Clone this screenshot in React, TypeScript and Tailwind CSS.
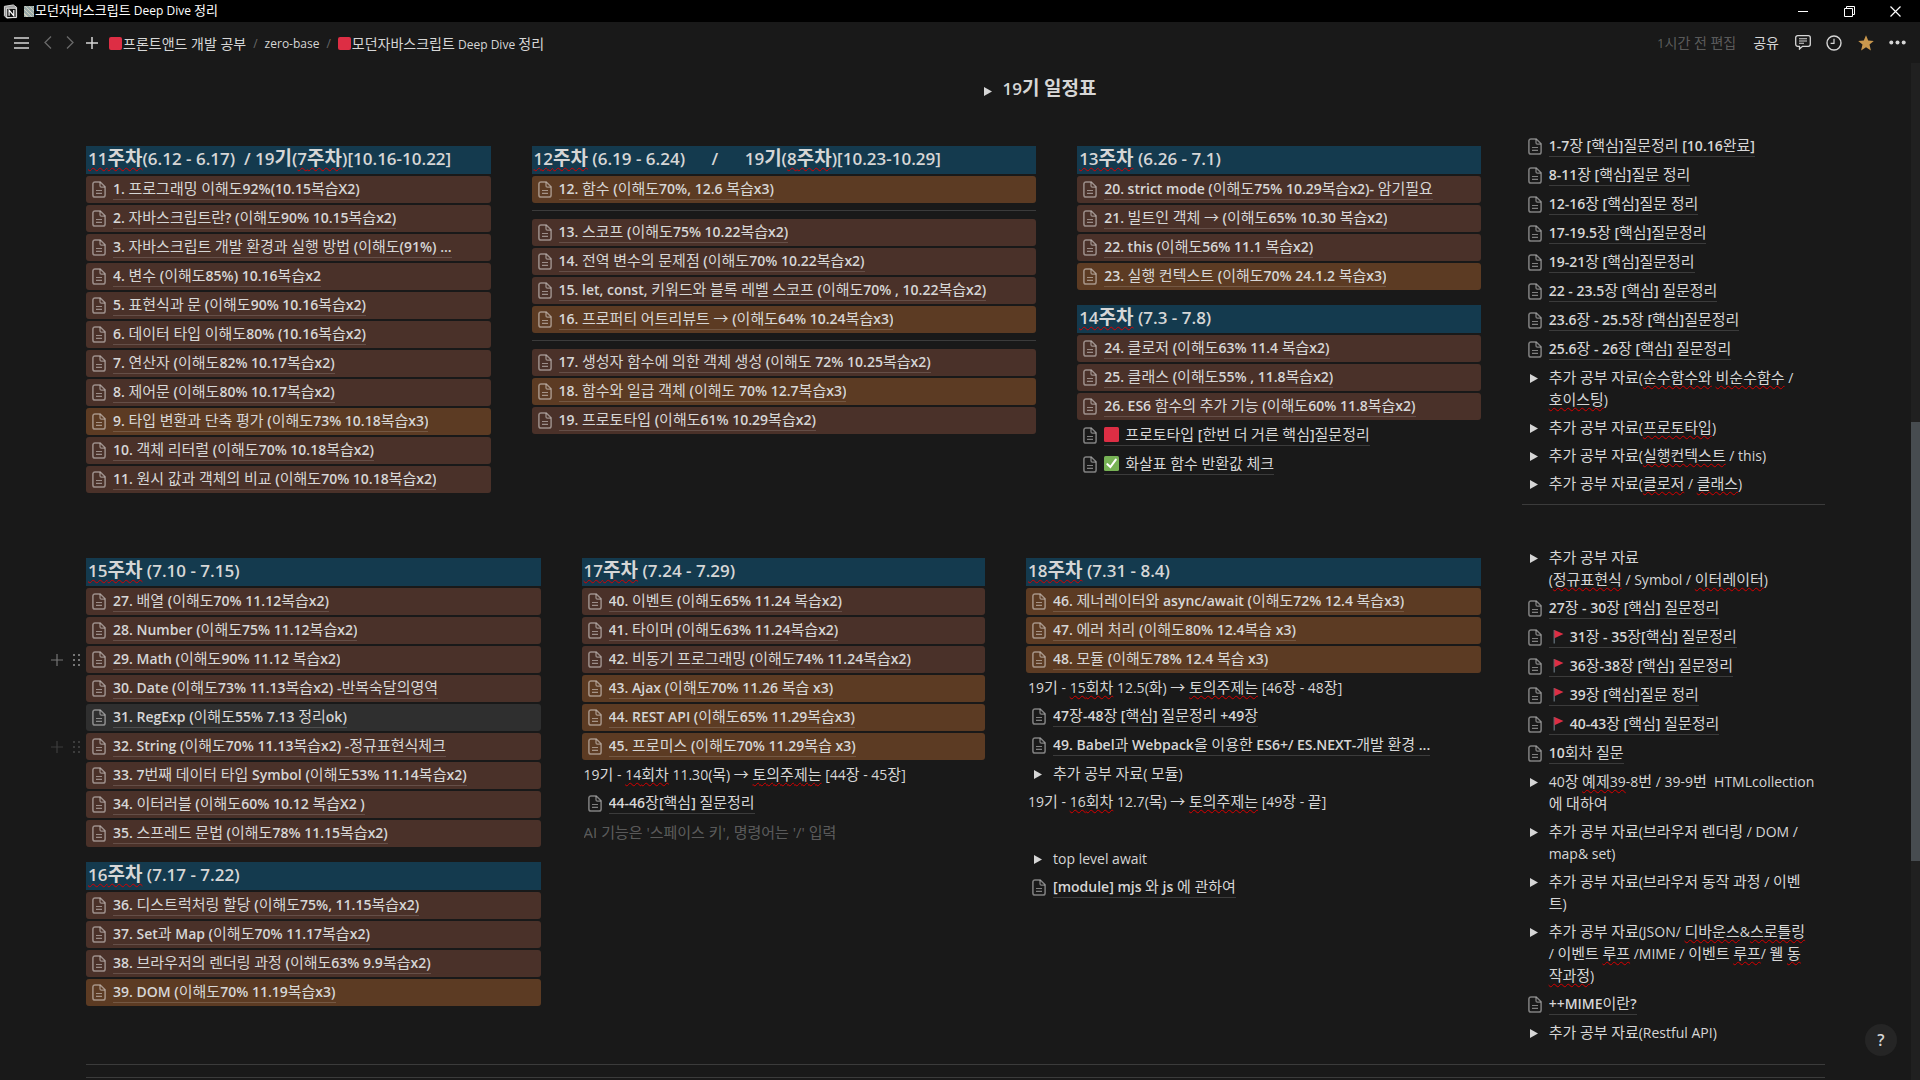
import React from "react";
import clsx from "clsx";

type Tone = "brown" | "orange" | "gray";
type Mark = "square" | "check" | "flag";

type Block =
  | { type: "heading"; text: string }
  | { type: "page"; text: string; tone?: Tone; mark?: Mark; handle?: "hover" | "fading" }
  | { type: "toggle"; text: string }
  | { type: "text"; text: string }
  | { type: "divider" }
  | { type: "blank" }
  | { type: "prompt"; text: string };

const TONES: Record<Tone, string> = {
  brown: "bg-[#4a3129]",
  orange: "bg-[#5c3b23]",
  gray: "bg-[#2f2f2f]",
};

const heading = (text: string): Block => ({ type: "heading", text });
const page = (text: string, tone?: Tone, extra: { mark?: Mark; handle?: "hover" | "fading" } = {}): Block => ({
  type: "page",
  text,
  tone,
  ...extra,
});
const toggle = (text: string): Block => ({ type: "toggle", text });
const text = (value: string): Block => ({ type: "text", text: value });
const divider: Block = { type: "divider" };
const blank: Block = { type: "blank" };

// Words between ~ ~ are flagged by the spell checker.
const week11: Block[] = [
  heading("~11주차~(6.12 - 6.17)  / 19기(~7주차~)[10.16-10.22]"),
  page("1. 프로그래밍 이해도92%(10.15복습X2)", "brown"),
  page("2. 자바스크립트란? (이해도90% 10.15복습x2)", "brown"),
  page("3. 자바스크립트 개발 환경과 실행 방법 (이해도(91%) ...", "brown"),
  page("4. 변수 (이해도85%) 10.16복습x2", "brown"),
  page("5. 표현식과 문 (이해도90% 10.16복습x2)", "brown"),
  page("6. 데이터 타입 이해도80% (10.16복습x2)", "brown"),
  page("7. 연산자 (이해도82% 10.17복습x2)", "brown"),
  page("8. 제어문 (이해도80% 10.17복습x2)", "brown"),
  page("9. 타입 변환과 단축 평가 (이해도73% 10.18복습x3)", "orange"),
  page("10. 객체 리터럴 (이해도70% 10.18복습x2)", "brown"),
  page("11. 원시 값과 객체의 비교 (이해도70% 10.18복습x2)", "brown"),
];

const week12: Block[] = [
  heading("~12주차~ (6.19 - 6.24)      /      19기(~8주차~)[10.23-10.29]"),
  page("12. 함수 (이해도70%, 12.6 복습x3)", "orange"),
  divider,
  page("13. 스코프 (이해도75% 10.22복습x2)", "brown"),
  page("14. 전역 변수의 문제점 (이해도70% 10.22복습x2)", "brown"),
  page("15. let, const, 키워드와 블록 레벨 스코프 (이해도70% , 10.22복습x2)", "brown"),
  page("16. 프로퍼티 어트리뷰트 → (이해도64% 10.24복습x3)", "orange"),
  divider,
  page("17. 생성자 함수에 의한 객체 생성 (이해도 72% 10.25복습x2)", "brown"),
  page("18. 함수와 일급 객체 (이해도 70% 12.7복습x3)", "orange"),
  page("19. 프로토타입 (이해도61% 10.29복습x2)", "brown"),
];

const week13: Block[] = [
  heading("~13주차~ (6.26 - 7.1)"),
  page("20. strict mode (이해도75% 10.29복습x2)- 암기필요", "brown"),
  page("21. 빌트인 객체 → (이해도65% 10.30 복습x2)", "brown"),
  page("22. this (이해도56% 11.1 복습x2)", "brown"),
  page("23. 실행 컨텍스트 (이해도70% 24.1.2 복습x3)", "orange"),
  heading("~14주차~ (7.3 - 7.8)"),
  page("24. 클로저 (이해도63% 11.4 복습x2)", "brown"),
  page("25. 클래스 (이해도55% , 11.8복습x2)", "brown"),
  page("26. ES6 함수의 추가 기능 (이해도60% 11.8복습x2)", "brown"),
  page("프로토타입 [한번 더 거른 핵심]질문정리", undefined, { mark: "square" }),
  page("화살표 함수 반환값 체크", undefined, { mark: "check" }),
];

const questionsTop: Block[] = [
  page("1-7장 [핵심]질문정리 [10.16완료]"),
  page("8-11장 [핵심]질문 정리"),
  page("12-16장 [핵심]질문 정리"),
  page("17-19.5장 [핵심]질문정리"),
  page("19-21장 [핵심]질문정리"),
  page("22 - 23.5장 [핵심] 질문정리"),
  page("23.6장 - 25.5장 [핵심]질문정리"),
  page("25.6장 - 26장 [핵심] 질문정리"),
  toggle("추가 공부 자료(~순수함수와~ ~비순수함수~ /\n~호이스팅~)"),
  toggle("추가 공부 자료(~프로토타입~)"),
  toggle("추가 공부 자료(~실행컨텍스트~ / this)"),
  toggle("추가 공부 자료(~클로저~ / ~클래스~)"),
  divider,
];

const week15: Block[] = [
  heading("~15주차~ (7.10 - 7.15)"),
  page("27. 배열 (이해도70% 11.12복습x2)", "brown"),
  page("28. Number (이해도75% 11.12복습x2)", "brown"),
  page("29. Math (이해도90% 11.12 복습x2)", "brown", { handle: "hover" }),
  page("30. Date (이해도73% 11.13복습x2) -반복숙달의영역", "brown"),
  page("31. RegExp (이해도55% 7.13 정리ok)", "gray"),
  page("32. String (이해도70% 11.13복습x2) -정규표현식체크", "brown", { handle: "fading" }),
  page("33. 7번째 데이터 타입 Symbol (이해도53% 11.14복습x2)", "brown"),
  page("34. 이터러블 (이해도60% 10.12 복습X2 )", "brown"),
  page("35. 스프레드 문법 (이해도78% 11.15복습x2)", "brown"),
  heading("~16주차~ (7.17 - 7.22)"),
  page("36. 디스트럭처링 할당 (이해도75%, 11.15복습x2)", "brown"),
  page("37. Set과 Map (이해도70% 11.17복습x2)", "brown"),
  page("38. 브라우저의 렌더링 과정 (이해도63% 9.9복습x2)", "brown"),
  page("39. DOM (이해도70% 11.19복습x3)", "orange"),
];

const week17: Block[] = [
  heading("~17주차~ (7.24 - 7.29)"),
  page("40. 이벤트 (이해도65% 11.24 복습x2)", "brown"),
  page("41. 타이머 (이해도63% 11.24복습x2)", "brown"),
  page("42. 비동기 프로그래밍 (이해도74% 11.24복습x2)", "brown"),
  page("43. Ajax (이해도70% 11.26 복습 x3)", "orange"),
  page("44. REST API (이해도65% 11.29복습x3)", "orange"),
  page("45. 프로미스 (이해도70% 11.29복습 x3)", "orange"),
  text("19기 - ~14회차~ 11.30(목) → ~토의주제는~ [44장 - 45장]"),
  page("44-46장[핵심] 질문정리"),
  { type: "prompt", text: "AI 기능은 '스페이스 키', 명령어는 '/' 입력" },
];

const week18: Block[] = [
  heading("~18주차~ (7.31 - 8.4)"),
  page("46. 제너레이터와 async/await (이해도72% 12.4 복습x3)", "orange"),
  page("47. 에러 처리 (이해도80% 12.4복습 x3)", "orange"),
  page("48. 모듈 (이해도78% 12.4 복습 x3)", "orange"),
  text("19기 - ~15회차~ 12.5(화) → ~토의주제는~ [46장 - 48장]"),
  page("47장-48장 [핵심] 질문정리 +49장"),
  page("49. Babel과 Webpack을 이용한 ES6+/ ES.NEXT-개발 환경 ..."),
  toggle("추가 공부 자료( 모듈)"),
  text("19기 - ~16회차~ 12.7(목) → ~토의주제는~ [49장 - 끝]"),
  blank,
  toggle("top level await"),
  page("[module] mjs 와 js 에 관하여"),
];

const questionsBottom: Block[] = [
  toggle("추가 공부 자료\n(~정규표현식~ / Symbol / ~이터레이터~)"),
  page("27장 - 30장 [핵심] 질문정리"),
  page("31장 - 35장[핵심] 질문정리", undefined, { mark: "flag" }),
  page("36장-38장 [핵심] 질문정리", undefined, { mark: "flag" }),
  page("39장 [핵심]질문 정리", undefined, { mark: "flag" }),
  page("40-43장 [핵심] 질문정리", undefined, { mark: "flag" }),
  page("10회차 질문"),
  toggle("40장 ~예제39~-8번 / 39-9번  HTMLcollection\n에 대하여"),
  toggle("추가 공부 자료(브라우저 렌더링 / DOM /\nmap& set)"),
  toggle("추가 공부 자료(브라우저 동작 과정 / 이벤\n트)"),
  toggle("추가 공부 자료(JSON/ ~디바운스~&~스로틀링~\n/ 이벤트 ~루프~ /MIME / 이벤트 ~루프~/ 웰 ~동\n작과정~)"),
  page("++MIME이란?"),
  toggle("추가 공부 자료(Restful API)"),
];

// Hangul runs get their own size so that they sit well beside the Latin face.
function Script({ value, size }: { value: string; size: "body" | "heading" }) {
  return (
    <>
      {value.split(/([\u3131-\uD79D→]+)/).map((run, i) =>
        i % 2 === 1 ? (
          <span key={i} className={size === "heading" ? "text-[19px] leading-none" : "text-[15px] leading-none font-normal"}>
            {run}
          </span>
        ) : (
          run
        )
      )}
    </>
  );
}

function RichText({ value, size = "body" }: { value: string; size?: "body" | "heading" }) {
  return (
    <>
      {value.split("~").map((part, i) =>
        i % 2 === 1 ? (
          <span
            key={i}
            className="underline decoration-[#d80000] decoration-wavy decoration-1 underline-offset-2 [text-decoration-skip-ink:none]"
          >
            <Script value={part} size={size} />
          </span>
        ) : (
          <Script key={i} value={part} size={size} />
        )
      )}
    </>
  );
}

function PageIcon() {
  return (
    <svg viewBox="0 0 14 17" className="h-[17px] w-[14px] shrink-0 text-white/45" fill="none" stroke="currentColor" strokeWidth="1.5">
      <path d="M3 .9h5.2l4.9 4.9V14a2.1 2.1 0 0 1-2.1 2.1H3A2.1 2.1 0 0 1 .9 14V3A2.1 2.1 0 0 1 3 .9Z" />
      <path d="M8 1.2v3.6c0 .8.5 1.3 1.3 1.3h3.5" strokeWidth="1.3" />
      <path d="M4 9.5h6M4 12.4h6" strokeWidth="1.1" />
    </svg>
  );
}

function MarkIcon({ mark }: { mark: Mark }) {
  if (mark === "square") {
    return (
      <svg viewBox="0 0 15 15" className="mr-[6px] inline h-[15px] w-[15px] align-[-2px]">
        <rect width="15" height="15" rx="1.5" fill="#dd2e44" />
      </svg>
    );
  }
  if (mark === "check") {
    return (
      <svg viewBox="0 0 15 15" className="mr-[6px] inline h-[15px] w-[15px] align-[-2px]">
        <rect width="15" height="15" rx="1.5" fill="#77b255" />
        <path d="M3.4 8.2 6.4 11 11.8 3.6" fill="none" stroke="#fff" strokeWidth="2.1" strokeLinecap="round" />
      </svg>
    );
  }
  return (
    <svg viewBox="0 0 15 15" className="mr-[6px] inline h-[15px] w-[15px] align-[-2px]">
      <path d="M5.2 1v13.5" stroke="#66757f" strokeWidth="1.2" />
      <path d="M5.5 1l9 4-9 4.3Z" fill="#dd2e44" />
    </svg>
  );
}

function RedSquare() {
  return <span className="h-[13px] w-[13px] shrink-0 rounded-[2px] bg-[#dd2e44]" />;
}

function Handle({ fading }: { fading: boolean }) {
  return (
    <div className={clsx("absolute top-0 -left-[35px] flex h-full items-center gap-[9px] text-white", fading ? "opacity-15" : "opacity-40")}>
      <button aria-label="블록 추가">
        <svg viewBox="0 0 12 12" className="h-3 w-3" stroke="currentColor" strokeWidth="1.2">
          <path d="M6 0v12M0 6h12" />
        </svg>
      </button>
      <button aria-label="블록 이동">
        <svg viewBox="0 0 10 14" className="h-[14px] w-[10px]" fill="currentColor">
          {[1, 6, 11].map((y) => (
            <React.Fragment key={y}>
              <rect x="1" y={y} width="2" height="2" />
              <rect x="6" y={y} width="2" height="2" />
            </React.Fragment>
          ))}
        </svg>
      </button>
    </div>
  );
}

function Triangle() {
  return (
    <svg viewBox="0 0 8 9" className="h-[9px] w-2" fill="currentColor">
      <path d="M0 0l8 4.5L0 9Z" />
    </svg>
  );
}

function BlockView({ block }: { block: Block }) {
  switch (block.type) {
    case "heading":
      return (
        <h3 className="mt-[13px] h-7 bg-[#143a4e] px-[2px] text-[17px] leading-[26px] font-semibold whitespace-pre">
          <RichText value={block.text} size="heading" />
        </h3>
      );
    case "page":
      return (
        <div className={clsx("relative flex h-[27px] items-center gap-[7px] rounded-[3px] pr-[2px] pl-[6px]", block.tone && TONES[block.tone])}>
          {block.handle && <Handle fading={block.handle === "fading"} />}
          <PageIcon />
          <a href="#" className="h-[21px] truncate border-b border-white/15 text-[14px] leading-[20px] font-semibold">
            {block.mark && <MarkIcon mark={block.mark} />}
            <Script value={block.text} size="body" />
          </a>
        </div>
      );
    case "toggle":
      return (
        <div className="flex gap-[7px] py-[2px] pr-[2px] pl-[6px]">
          <button className="flex h-[22px] w-[14px] shrink-0 items-center pl-[2px]" aria-label="토글 열기">
            <Triangle />
          </button>
          <p className="min-w-0 flex-1 text-[14px] leading-[22px] whitespace-pre-wrap">
            <RichText value={block.text} />
          </p>
        </div>
      );
    case "text":
      return (
        <p className="px-[2px] py-[2px] text-[14px] leading-[22px]">
          <RichText value={block.text} />
        </p>
      );
    case "prompt":
      return (
        <input
          className="h-[26px] w-full bg-transparent px-[2px] text-[15px] outline-none placeholder:text-white/30"
          aria-label="새 블록"
          placeholder={block.text}
        />
      );
    case "divider":
      return <hr className="mt-[5px] mb-[6px] border-white/15" />;
    case "blank":
      return <div className="h-[27px]" />;
  }
}

function Column({ blocks, className }: { blocks: Block[]; className: string }) {
  return (
    <div className={clsx("flex min-w-0 flex-col gap-[2px]", className)}>
      {blocks.map((b, i) => (
        <BlockView key={i} block={b} />
      ))}
    </div>
  );
}

function TitleBar() {
  return (
    <div className="flex h-[22px] shrink-0 items-center bg-black pl-[3px] text-[12px] text-white">
      <svg viewBox="0 0 16 16" className="h-[15px] w-[15px]">
        <path d="M1.5 2.5 11 1l3.500 2.500V14L4 15l-2.500-2.500Z" fill="#9b9b9b" stroke="#ddd" strokeWidth="1" />
        <rect x="4" y="4.5" width="10" height="10" fill="#111" stroke="#eee" />
        <path d="M6.5 12.500v-6l5 6v-6" fill="none" stroke="#fff" strokeWidth="1.3" />
      </svg>
      <span className="mr-px ml-[6px] h-[11px] w-[10px] bg-[repeating-linear-gradient(45deg,#9aa_0_2px,#ccb_2px_3px)]" />
      <span>
        <span className="text-[13px]">모던자바스크립트</span> Deep Dive <span className="text-[13px]">정리</span>
      </span>
      <div className="ml-auto flex items-center gap-[35px] pr-[19px]">
        <button aria-label="최소화">
          <svg viewBox="0 0 11 11" className="h-[11px] w-[11px]" stroke="currentColor">
            <path d="M0 5.5h10" />
          </svg>
        </button>
        <button aria-label="이전 크기로">
          <svg viewBox="0 0 11 11" className="h-[11px] w-[11px]" fill="none" stroke="currentColor">
            <path d="M.5 2.5h8v8h-8ZM2.5 2.5v-2h8v8h-2" />
          </svg>
        </button>
        <button aria-label="닫기">
          <svg viewBox="0 0 11 11" className="h-[11px] w-[11px]" stroke="currentColor" strokeWidth="1.2">
            <path d="M.5.5l10 10M10.5.5l-10 10" />
          </svg>
        </button>
      </div>
    </div>
  );
}

function TopBar() {
  return (
    <header className="flex h-[41px] shrink-0 items-center px-[14px] text-[12px]">
      <button aria-label="메뉴">
        <svg viewBox="0 0 15 12" className="h-3 w-[15px]" stroke="currentColor" strokeWidth="1.5">
          <path d="M0 1h15M0 6h15M0 11h15" />
        </svg>
      </button>
      <button aria-label="뒤로" className="ml-[15px] text-white/35">
        <svg viewBox="0 0 8 13" className="h-[13px] w-2" fill="none" stroke="currentColor" strokeWidth="1.3">
          <path d="M7 .5 1 6.5l6 6" />
        </svg>
      </button>
      <button aria-label="앞으로" className="ml-[14px] text-white/35">
        <svg viewBox="0 0 8 13" className="h-[13px] w-2" fill="none" stroke="currentColor" strokeWidth="1.3">
          <path d="M1 .5l6 6-6 6" />
        </svg>
      </button>
      <button aria-label="새 페이지" className="ml-3">
        <svg viewBox="0 0 12 12" className="h-3 w-3" stroke="currentColor" strokeWidth="1.5">
          <path d="M6 0v12M0 6h12" />
        </svg>
      </button>
      <nav className="ml-[11px] flex items-center pt-[2px]">
        <a href="#" className="flex items-center gap-px">
          <RedSquare />
          <span className="text-[14px]">프론트앤드 개발 공부</span>
        </a>
        <span className="mx-[7px] text-white/35">/</span>
        <a href="#">zero-base</a>
        <span className="mx-[7px] text-white/35">/</span>
        <a href="#" className="flex items-center gap-px">
          <RedSquare />
          <span>
            <span className="text-[14px]">모던자바스크립트</span> Deep Dive <span className="text-[14px]">정리</span>
          </span>
        </a>
      </nav>
      <div className="ml-auto flex items-center text-[14px]">
        <span className="mr-[17px] text-white/30">
          <span className="text-[13px]">1</span>시간 전 편집
        </span>
        <button className="mr-4">공유</button>
        <button aria-label="댓글" className="mr-[15px]">
          <svg viewBox="0 0 16 15" className="h-[15px] w-4" fill="none" stroke="currentColor" strokeWidth="1.3">
            <path d="M2.7.7h10.6a2 2 0 0 1 2 2v6.6a2 2 0 0 1-2 2H7.5L4.5 14v-2.7H2.7a2 2 0 0 1-2-2V2.7a2 2 0 0 1 2-2Z" />
            <path d="M4 3.8h8M4 6h8M4 8.2h5" strokeWidth="1.1" />
          </svg>
        </button>
        <button aria-label="업데이트" className="mr-4">
          <svg viewBox="0 0 16 16" className="h-4 w-4" fill="none" stroke="currentColor" strokeWidth="1.4">
            <circle cx="8" cy="8" r="7" />
            <path d="M8 3.8v4.600H4.6" strokeWidth="1.2" />
          </svg>
        </button>
        <button aria-label="즐겨찾기 해제" className="mr-[15px]">
          <svg viewBox="0 0 16 16" className="h-4 w-4" fill="#ca984d">
            <path d="M8 .2l2.200 5.300 5.600.4-4.300 3.700 1.400 5.800L8 12.300l-4.900 3.100 1.400-5.800L.2 5.900l5.600-.4Z" />
          </svg>
        </button>
        <button aria-label="더 보기">
          <svg viewBox="0 0 17 5" className="h-[5px] w-[17px]" fill="currentColor">
            <circle cx="2.3" cy="2.5" r="2" />
            <circle cx="8.5" cy="2.5" r="2" />
            <circle cx="14.7" cy="2.5" r="2" />
          </svg>
        </button>
      </div>
    </header>
  );
}

export default function App() {
  return (
    <div className="flex h-screen flex-col overflow-hidden bg-[#191919] font-['Open_Sans','Noto_Sans_CJK_KR',sans-serif] text-[#d6d6d6]">
      <TitleBar />
      <TopBar />
      <div className="relative flex min-h-0 flex-1">
        <main className="min-w-0 flex-1 overflow-hidden px-[86px]">
          <div className="flex items-center justify-center gap-[11px] pt-3 pl-[169px]">
            <button aria-label="토글 열기" className="pt-1">
              <Triangle />
            </button>
            <h2 className="text-[17px] leading-7 font-semibold">
              <Script value="19기 일정표" size="heading" />
            </h2>
          </div>

          <section className="mt-[30px] flex gap-[41px]">
            <Column blocks={week11} className="flex-[404]" />
            <Column blocks={week12} className="flex-[504]" />
            <Column blocks={week13} className="flex-[403]" />
            <Column blocks={questionsTop} className="flex-[303]" />
          </section>

          <section className="mt-[34px] flex gap-[41px]">
            <Column blocks={week15} className="flex-[454]" />
            <Column blocks={week17} className="flex-[403]" />
            <Column blocks={week18} className="flex-[454]" />
            <Column blocks={questionsBottom} className="flex-[303]" />
          </section>

          <hr className="mt-[18px] border-white/15" />
          <hr className="mt-3 border-white/15" />
        </main>

        {/* Scrollbar */}
        <div className="flex w-[9px] shrink-0 flex-col bg-[#202020]">
          <div className="flex-[359]" />
          <div className="flex-[439] bg-[#474c50]" />
          <div className="flex-[219]" />
        </div>

        <button
          aria-label="도움말"
          className="absolute right-[23px] bottom-[24px] h-8 w-8 rounded-full bg-[#252525] text-[16px] font-semibold"
        >
          ?
        </button>
      </div>
    </div>
  );
}
